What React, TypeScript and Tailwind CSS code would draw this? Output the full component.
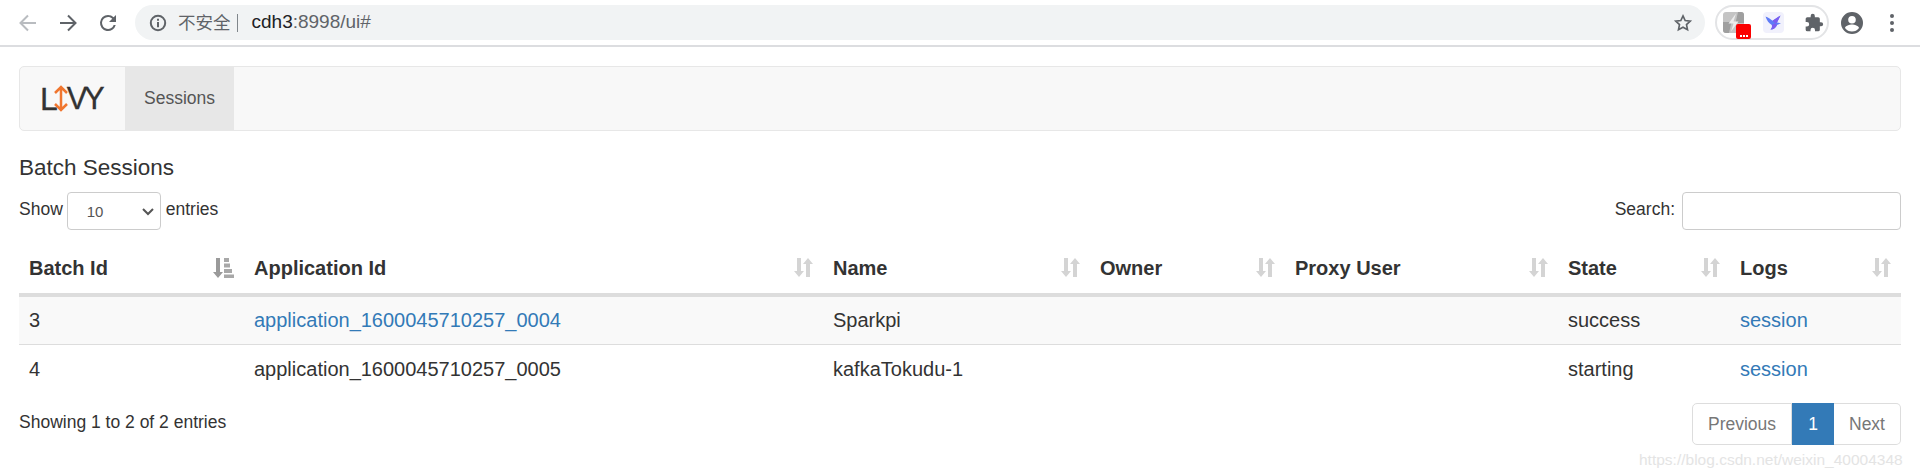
import React from "react";

const font = { fontFamily: '"Liberation Sans", Arial, sans-serif' };

function SortBoth({ active }: { active?: boolean }) {
  if (active) {
    return (
      <svg width="22" height="22" viewBox="0 0 22 22" className="shrink-0">
        <path d="M4 1h4v14h3l-5 6-5-6h3z" fill="#9a9a9a" />
        <path d="M12 1h5v4h-5zM12 6.500h6v4h-6zM12 12h8v4h-8zM12 17.500h10v3.500H12z" fill="#a8a8a8" />
      </svg>
    );
  }
  return (
    <svg width="20" height="21" viewBox="0 0 20 21" className="shrink-0">
      <path d="M4 1h4v13h3L6 20 1 14h3z" fill="#d4d4d4" />
      <path d="M13 20h4V7h3L15 1l-5 6h3z" fill="#d4d4d4" />
    </svg>
  );
}

const columns = [
  { label: "Batch Id", w: "w-[225px]", active: true },
  { label: "Application Id", w: "w-[579px]" },
  { label: "Name", w: "w-[267px]" },
  { label: "Owner", w: "w-[195px]" },
  { label: "Proxy User", w: "w-[273px]" },
  { label: "State", w: "w-[172px]" },
  { label: "Logs", w: "w-[171px]" },
];

function Toolbar() {
  return (
    <div className="h-[47px] bg-white border-b-2 border-[#dcdde0] flex items-center pl-[16px] pr-[10px]">
      <svg width="24" height="24" viewBox="0 0 24 24" fill="none" stroke="#b9bcc0" strokeWidth="2" className="mr-[16px] shrink-0">
        <path d="M20 12H5M12 4.500 4.500 12l7.500 7.500" />
      </svg>
      <svg width="24" height="24" viewBox="0 0 24 24" fill="none" stroke="#5f6368" strokeWidth="2" className="mr-[16px] shrink-0">
        <path d="M4 12h15M12 4.500l7.500 7.500-7.500 7.500" />
      </svg>
      <svg width="24" height="24" viewBox="0 0 24 24" className="mr-[15px] shrink-0">
        <path
          d="M17.650 6.350A7.950 7.950 0 0 0 12 4a8 8 0 1 0 7.740 10h-2.080A6 6 0 1 1 12 6c1.660 0 3.140.69 4.220 1.780L13 11h7V4z"
          fill="#5f6368"
        />
      </svg>
      <div className="w-[1570px] h-[35px] shrink-0 rounded-full bg-[#f1f3f4] flex items-center pl-[14px] pr-[12px] text-[19px]">
        <svg width="18" height="18" viewBox="0 0 18 18" className="mr-[11px]">
          <circle cx="9" cy="9" r="7.200" fill="none" stroke="#5f6368" strokeWidth="2" />
          <path d="M8 8h2v5.200H8zM8 4.800h2v2H8z" fill="#5f6368" />
        </svg>
        <span className="text-[#5f6368] text-[17.500px] mr-[6px]" style={{ fontFamily: '"Noto Sans CJK SC", sans-serif' }}>不安全</span>
        <span className="w-px h-[18px] bg-[#80868b] mr-[14px]" />
        <span className="text-[#202124]">cdh3</span>
        <span className="text-[#5f6368]">:8998/ui#</span>
        <svg width="20" height="20" viewBox="0 0 24 24" fill="none" stroke="#5f6368" strokeWidth="2" className="ml-auto">
          <path d="M12 3.500l2.600 5.600 6.100.7-4.500 4.200 1.200 6-5.400-3-5.400 3 1.200-6L3.300 9.800l6.100-.7z" />
        </svg>
      </div>
      <div className="ml-[10px] w-[114px] h-[35px] rounded-full border-2 border-[#e3e4e6] flex items-center pl-[6px] shrink-0">
        <div className="relative w-[21px] h-[21px]">
          <svg width="21" height="21" viewBox="0 0 21 21" className="absolute inset-0">
            <rect width="21" height="21" rx="3" fill="#c4c4c4" />
            <path d="M21 3v8h-8.500L15 0h3a3 3 0 0 1 3 3z" fill="#9f9f9f" />
            <path d="M0 18v-8h8.500L6 21H3a3 3 0 0 1-3-3z" fill="#9f9f9f" />
            <path d="M13 1.500 5.500 11.500h5L8 19.500l7.500-10h-5z" fill="#ededed" />
          </svg>
          <div className="absolute left-[13px] top-[12px] w-[15px] h-[15px] rounded-[2px] bg-[#fb0000] flex items-end justify-center gap-[1px] pb-[2px]">
            <span className="w-[2px] h-[2px] bg-white" />
            <span className="w-[2px] h-[2px] bg-white" />
            <span className="w-[2px] h-[2px] bg-white" />
          </div>
        </div>
        <div className="ml-[19px] w-[21px] h-[21px] rounded-[4px] bg-[#f1f1fc] flex items-center justify-center">
          <svg width="19" height="19" viewBox="0 0 19 19">
            <path d="M1.500 3.500c2.500 1 5 2.300 7 4.200L16.500 2.500 13 9.500l4 .8-4 1.600c-1 2.800-3.200 4.300-6.500 4.600 1.300-1.500 1.800-3 1.300-4.500C5 10.500 2.800 7.500 1.500 3.500z" fill="#5f7cf7" />
            <path d="M8.500 7.700 16.500 2.500 13 9.500 7.800 12c.9 1.500.4 3-1.300 4.500 3.300-.3 5.500-1.800 6.500-4.600z" fill="#7c5cf0" />
          </svg>
        </div>
        <svg width="20" height="20" viewBox="0 0 24 24" className="ml-[20px]">
          <path
            d="M20.500 11H19V7a2 2 0 0 0-2-2h-4V3.500a2.500 2.500 0 0 0-5 0V5H4a2 2 0 0 0-2 2v3.800h1.500a2.700 2.700 0 0 1 0 5.400H2V20a2 2 0 0 0 2 2h3.800v-1.500a2.700 2.700 0 0 1 5.400 0V22H17a2 2 0 0 0 2-2v-4h1.500a2.500 2.500 0 0 0 0-5z"
            fill="#5f6368"
          />
        </svg>
      </div>
      <svg width="24" height="24" viewBox="0 0 24 24" className="ml-[11px] shrink-0">
        <path
          d="M12 1a11 11 0 1 0 0 22 11 11 0 0 0 0-22zm0 4a3.800 3.800 0 1 1 0 7.600A3.800 3.800 0 0 1 12 5zm0 15.500a8.800 8.800 0 0 1-7-3.600c.1-2.300 4.700-3.500 7-3.500s6.900 1.200 7 3.500a8.800 8.800 0 0 1-7 3.600z"
          fill="#5f6368"
        />
      </svg>
      <div className="ml-[26px] flex flex-col gap-[3px] shrink-0">
        <span className="w-[4px] h-[4px] rounded-full bg-[#5f6368]" />
        <span className="w-[4px] h-[4px] rounded-full bg-[#5f6368]" />
        <span className="w-[4px] h-[4px] rounded-full bg-[#5f6368]" />
      </div>
    </div>
  );
}

export default function App() {
  return (
    <div className="relative w-[1920px] h-[475px] bg-white overflow-hidden text-[#333] text-[17.500px]" style={font}>
      <Toolbar />
      <div className="px-[19px] pt-[19px]">
        <div className="h-[65px] rounded-[5px] border border-[#e7e7e7] bg-[#f8f8f8] flex">
          <div className="w-[105px] flex items-center pl-[20px]">
            <span className="text-[32px] leading-none text-[#333] tracking-[-5px] [-webkit-text-stroke:0.3px_#333]">L</span>
            <svg width="16" height="27" viewBox="0 0 16 27" className="shrink-0">
              <path d="M8 2v23M2 8l6-6 6 6M2 19l6 6 6-6" fill="none" stroke="#f0762f" strokeWidth="2.500" />
            </svg>
            <span className="-ml-[2px] text-[31px] leading-none text-[#333] tracking-[-3.500px] [-webkit-text-stroke:0.3px_#333]">VY</span>
          </div>
          <div className="w-[109px] bg-[#e7e7e7] text-[#555] flex items-center justify-center">Sessions</div>
        </div>
        <div className="text-[22.500px] leading-[25px] mt-[24px] text-[#333]">Batch Sessions</div>
        <div className="flex justify-between mt-[12px]">
          <div className="flex items-center h-[38px]">
            <span className="-mt-[4px]">Show</span>
            <div className="ml-[4px] mr-[5px] w-[94px] h-[38px] rounded-[4px] border border-[#ccc] flex items-center pl-[19px] pr-[5px] justify-between text-[#555] text-[15px]">
              <span className="pt-[3px]">10</span>
              <svg width="14" height="14" viewBox="0 0 14 14" fill="none" stroke="#555" strokeWidth="2">
                <path d="M2 5l5 5 5-5" />
              </svg>
            </div>
            <span className="-mt-[4px]">entries</span>
          </div>
          <div className="flex items-center h-[38px]">
            <span className="-mt-[4px]">Search:</span>
            <div className="ml-[7px] w-[219px] h-[38px] rounded-[4px] border border-[#ccc]" />
          </div>
        </div>
        <table className="mt-[12px] w-[1882px] table-fixed border-collapse text-[20px]">
          <thead>
            <tr className="border-b-[4px] border-[#ddd]">
              {columns.map((c) => (
                <th key={c.label} className={`${c.w} h-[53px] px-[10px] text-left font-bold align-middle`}>
                  <div className="flex items-center justify-between">
                    <span>{c.label}</span>
                    <SortBoth active={c.active} />
                  </div>
                </th>
              ))}
            </tr>
          </thead>
          <tbody>
            <tr className="h-[49px] bg-[#f9f9f9] border-b border-[#ddd]">
              <td className="px-[10px]">3</td>
              <td className="px-[10px] text-[#337ab7]">application_1600045710257_0004</td>
              <td className="px-[10px]">Sparkpi</td>
              <td className="px-[10px]" />
              <td className="px-[10px]" />
              <td className="px-[10px]">success</td>
              <td className="px-[10px] text-[#337ab7]">session</td>
            </tr>
            <tr className="h-[49px]">
              <td className="px-[10px]">4</td>
              <td className="px-[10px]">application_1600045710257_0005</td>
              <td className="px-[10px]">kafkaTokudu-1</td>
              <td className="px-[10px]" />
              <td className="px-[10px]" />
              <td className="px-[10px]">starting</td>
              <td className="px-[10px] text-[#337ab7]">session</td>
            </tr>
          </tbody>
        </table>
        <div className="flex justify-between items-start mt-[10px]">
          <div className="pt-[6px]">Showing 1 to 2 of 2 entries</div>
          <div className="flex h-[42px]">
            <div className="w-[100px] border border-[#ddd] rounded-l-[5px] flex items-center justify-center text-[#777]">Previous</div>
            <div className="w-[42px] bg-[#337ab7] text-white flex items-center justify-center">1</div>
            <div className="w-[67px] border border-[#ddd] border-l-0 rounded-r-[5px] flex items-center justify-center text-[#777]">Next</div>
          </div>
        </div>
      </div>
      <div className="absolute left-[1639px] top-[448px] text-[15.500px] text-[#e4e4e4] whitespace-nowrap">https://blog.csdn.net/weixin_40004348</div>
    </div>
  );
}
